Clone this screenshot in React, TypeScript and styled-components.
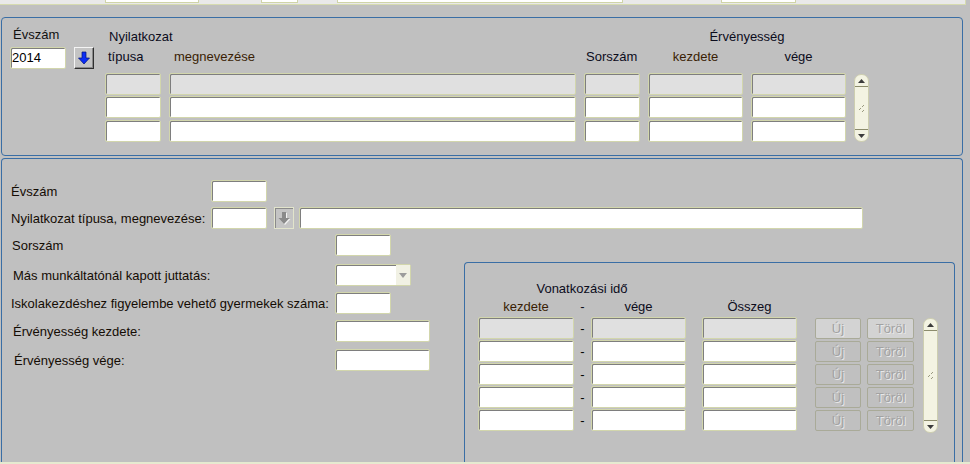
import React from "react";
import styled, { createGlobalStyle } from "styled-components";

const GlobalStyle = createGlobalStyle`
  html, body {
    margin: 0;
    padding: 0;
    background: #c0c0c0;
  }
  body {
    font-family: "Liberation Sans", Arial, sans-serif;
    font-size: 13px;
    color: #111;
  }
`;

const Page = styled.div`
  width: 970px;
  height: 464px;
  overflow: hidden;
  display: flex;
  flex-direction: column;
`;

const TopStrip = styled.div`
  width: 965px;
  height: 4px;
  flex-shrink: 0;
  display: flex;
  align-items: flex-start;
  background: #e9e9e9;
  border-bottom: 1px solid #d6dbb0;
  border-right: 1px solid #d6dbb0;
`;

const StripField = styled.div<{ $gap: number; $w: number }>`
  margin-left: ${(p) => p.$gap}px;
  width: ${(p) => p.$w}px;
  height: 3px;
  box-sizing: border-box;
  background: #fff;
  border: 1px solid #d0d4a8;
  border-top: none;
`;

const Panel = styled.div<{ $top: number; $h: number; $open?: boolean }>`
  margin-top: ${(p) => p.$top}px;
  margin-left: 1px;
  width: 962px;
  height: ${(p) => p.$h}px;
  flex-shrink: 0;
  box-sizing: border-box;
  display: flex;
  border: 1px solid #3a6ea5;
  border-radius: ${(p) => (p.$open ? "4px 4px 0 0" : "4px")};
  ${(p) => (p.$open ? "border-bottom: none;" : "")}
`;

const BottomStrip = styled.div`
  height: 2px;
  background: #e6ead0;
`;

/* ---------- shared widgets ---------- */

const Field = styled.div<{ $w: number; $muted?: boolean }>`
  width: ${(p) => p.$w}px;
  height: 22px;
  flex-shrink: 0;
  box-sizing: border-box;
  padding: 2px 0 0 1px;
  line-height: 15px;
  color: #000;
  background: ${(p) => (p.$muted ? "#e0e0e0" : "#fff")};
  border: 1px solid #d2d6ac;
  border-radius: 2px;
  box-shadow: inset 1px 1px 0 #7e7e7e;
`;

const LovButton = styled.div<{ $disabled?: boolean }>`
  width: 20px;
  height: 22px;
  flex-shrink: 0;
  box-sizing: border-box;
  display: flex;
  align-items: center;
  justify-content: center;
  background: #c4c4c4;
  border: 1px solid;
  border-color: ${(p) =>
    p.$disabled ? "#e2e4cc #e2e4cc #e2e4cc #e2e4cc" : "#f4f4f4 #303030 #303030 #f4f4f4"};
  box-shadow: ${(p) => (p.$disabled ? "inset 1px 1px 0 #8a8a8a" : "inset -1px -1px 0 #8a8a8a")};
`;

const Scroll = styled.div<{ $h: number; $top: number; $left: number }>`
  width: 15px;
  height: ${(p) => p.$h}px;
  margin-top: ${(p) => p.$top}px;
  margin-left: ${(p) => p.$left}px;
  flex-shrink: 0;
  box-sizing: border-box;
  display: flex;
  flex-direction: column;
  overflow: hidden;
  background: #f3f3e2;
  border: 1px solid #cdceb0;
  border-radius: 7px;
`;

const ScrollEnd = styled.div<{ $up?: boolean }>`
  height: 11px;
  flex-shrink: 0;
  display: flex;
  align-items: center;
  justify-content: center;
  ${(p) => (p.$up ? "border-bottom" : "border-top")}: 1px solid #8c8c6c;
`;

const ScrollTrack = styled.div`
  flex: 1;
  display: flex;
  align-items: center;
  justify-content: center;
`;

function Scrollbar({ h, top, left }: { h: number; top: number; left: number }) {
  return (
    <Scroll $h={h} $top={top} $left={left}>
      <ScrollEnd $up>
        <svg width="7" height="4" viewBox="0 0 7 4">
          <path d="M3.5 0L7 4H0z" fill="#3c3c3c" />
        </svg>
      </ScrollEnd>
      <ScrollTrack>
        <svg width="7" height="9" viewBox="0 0 7 9">
          <rect x="5" y="1" width="1" height="1" fill="#9a9a80" />
          <rect x="4" y="2" width="1" height="1" fill="#9a9a80" />
          <rect x="2" y="4" width="1" height="1" fill="#9a9a80" />
          <rect x="1" y="5" width="1" height="1" fill="#9a9a80" />
          <rect x="5" y="6" width="1" height="1" fill="#9a9a80" />
          <rect x="4" y="7" width="1" height="1" fill="#9a9a80" />
        </svg>
      </ScrollTrack>
      <ScrollEnd>
        <svg width="7" height="4" viewBox="0 0 7 4">
          <path d="M0 0H7L3.5 4z" fill="#3c3c3c" />
        </svg>
      </ScrollEnd>
    </Scroll>
  );
}

/* ---------- top panel ---------- */

const YearBlock = styled.div`
  width: 103px;
  flex-shrink: 0;
  box-sizing: border-box;
  padding: 9px 0 0 8px;
`;

const YearLabel = styled.div`
  height: 15px;
  line-height: 15px;
  padding-left: 3px;
`;

const YearInputs = styled.div`
  display: flex;
  gap: 8px;
  margin-top: 5px;
`;

const TableBlock = styled.div`
  padding-top: 11px;
  display: flex;
  flex-direction: column;
`;

const HeadLine = styled.div<{ $top?: number }>`
  display: grid;
  grid-template-columns: 56px 407px 56px 95px 95px;
  column-gap: 8px;
  height: 15px;
  line-height: 15px;
  margin-top: ${(p) => p.$top ?? 0}px;
`;

const Head = styled.div<{ $span?: string; $pad?: number; $center?: boolean; $brown?: boolean }>`
  grid-column: ${(p) => p.$span ?? "auto"};
  padding-left: ${(p) => p.$pad ?? 0}px;
  text-align: ${(p) => (p.$center ? "center" : "left")};
  white-space: nowrap;
  color: ${(p) => (p.$brown ? "#3a1e04" : "#0c0c1c")};
`;

const RowsArea = styled.div<{ $top: number }>`
  display: flex;
  margin-top: ${(p) => p.$top}px;
`;

const DataGrid = styled.div`
  display: grid;
  grid-template-columns: 56px 407px 56px 95px 95px;
  column-gap: 8px;
  row-gap: 1px;
`;

/* ---------- lower panel ---------- */

const LeftForm = styled.div`
  width: 462px;
  flex-shrink: 0;
  padding-top: 21px;
  display: flex;
  flex-direction: column;
`;

const FormRow = styled.div<{ $top: number; $indent: number }>`
  display: flex;
  align-items: center;
  margin-top: ${(p) => p.$top}px;
  padding-left: ${(p) => 9 + p.$indent}px;
`;

const FormLabel = styled.div<{ $w: number }>`
  width: ${(p) => p.$w}px;
  flex-shrink: 0;
  white-space: nowrap;
  color: #140c04;
`;

const Gap = styled.div<{ $w: number }>`
  width: ${(p) => p.$w}px;
  flex-shrink: 0;
`;

const Select = styled(Field)`
  display: flex;
  justify-content: flex-end;
  padding: 0;
`;

const SelectArrow = styled.div`
  width: 14px;
  display: flex;
  align-items: center;
  justify-content: center;
  background: #f1f1e4;
`;

const RightCol = styled.div`
  flex: 1;
  padding: 103px 7px 0 0;
  display: flex;
  flex-direction: column;
`;

const SubPanel = styled.div`
  flex: 1;
  box-sizing: border-box;
  padding: 18px 0 0 13px;
  border: 1px solid #3a6ea5;
  border-bottom: none;
  border-radius: 4px 4px 0 0;
`;

const SubHead = styled.div<{ $top?: number }>`
  display: flex;
  height: 15px;
  line-height: 15px;
  margin-top: ${(p) => p.$top ?? 0}px;
`;

const SubHeadCell = styled.div<{ $w: number; $gap?: number; $brown?: boolean }>`
  width: ${(p) => p.$w}px;
  margin-left: ${(p) => p.$gap ?? 0}px;
  text-align: center;
  white-space: nowrap;
  color: ${(p) => (p.$brown ? "#3a1e04" : "#0c0c1c")};
`;

const SubRows = styled.div`
  display: flex;
  flex-direction: column;
  gap: 1px;
`;

const SubRow = styled.div`
  display: flex;
  align-items: center;
`;

const Dash = styled.div`
  width: 17px;
  text-align: center;
  color: #000;
`;

const RowButton = styled.div<{ $w: number; $gap: number; $first?: boolean }>`
  width: ${(p) => p.$w}px;
  height: 21px;
  margin-left: ${(p) => p.$gap}px;
  box-sizing: border-box;
  display: flex;
  align-items: center;
  justify-content: center;
  background: ${(p) => (p.$first ? "#d3d3d3" : "#c0c0c0")};
  border: 1px solid #a9aa98;
  border-radius: 2px;
  color: #a2a2a2;
  text-shadow: 1px 1px 0 #e8e8e8;
`;

function BlueArrow() {
  return (
    <svg width="12" height="14" viewBox="0 0 12 14">
      <path d="M4 1h4v6h3.5L6 13 0.5 7H4z" fill="#0a2cf5" stroke="#00127a" strokeWidth="0.7" />
    </svg>
  );
}

function GreyArrow() {
  return (
    <svg width="13" height="14" viewBox="0 0 13 14">
      <path d="M5 2h4v6h3.5L7 14 1.5 8H5z" fill="#f2f2f2" />
      <path d="M4 1h4v6h3.5L6 13 0.5 7H4z" fill="#8a8a8a" />
    </svg>
  );
}

export default function App() {
  const topRows = [0, 1, 2];
  const subRows = [0, 1, 2, 3, 4];

  return (
    <Page>
      <GlobalStyle />
      <TopStrip>
        <StripField $gap={105} $w={94} />
        <StripField $gap={62} $w={37} />
        <StripField $gap={39} $w={286} />
        <StripField $gap={98} $w={75} />
      </TopStrip>

      <Panel $top={12} $h={139}>
        <YearBlock>
          <YearLabel>Évszám</YearLabel>
          <YearInputs>
            <Field $w={56}>2014</Field>
            <LovButton>
              <BlueArrow />
            </LovButton>
          </YearInputs>
        </YearBlock>

        <TableBlock>
          <HeadLine>
            <Head $span="1 / 3" $pad={4}>
              Nyilatkozat
            </Head>
            <Head $span="4 / 6" $center>
              Érvényesség
            </Head>
          </HeadLine>
          <HeadLine $top={5}>
            <Head $pad={3}>típusa</Head>
            <Head $pad={5} $brown>
              megnevezése
            </Head>
            <Head $pad={2}>Sorszám</Head>
            <Head $center $brown>
              kezdete
            </Head>
            <Head $center>vége</Head>
          </HeadLine>
          <RowsArea $top={9}>
            <DataGrid>
              {topRows.map((r) => (
                <React.Fragment key={r}>
                  <Field $w={56} $muted={r === 0} />
                  <Field $w={407} $muted={r === 0} />
                  <Field $w={56} $muted={r === 0} />
                  <Field $w={95} $muted={r === 0} />
                  <Field $w={95} $muted={r === 0} />
                </React.Fragment>
              ))}
            </DataGrid>
            <Scrollbar h={68} top={1} left={8} />
          </RowsArea>
        </TableBlock>
      </Panel>

      <Panel $top={2} $h={304} $open>
        <LeftForm>
          <FormRow $top={0} $indent={0}>
            <FormLabel $w={200}>Évszám</FormLabel>
            <Field $w={56} />
          </FormRow>
          <FormRow $top={5} $indent={0}>
            <FormLabel $w={200}>Nyilatkozat típusa, megnevezése:</FormLabel>
            <Field $w={56} />
            <Gap $w={7} />
            <LovButton $disabled>
              <GreyArrow />
            </LovButton>
            <Gap $w={5} />
            <Field $w={564} />
          </FormRow>
          <FormRow $top={5} $indent={1}>
            <FormLabel $w={323}>Sorszám</FormLabel>
            <Field $w={56} />
          </FormRow>
          <FormRow $top={8} $indent={2}>
            <FormLabel $w={322}>Más munkáltatónál kapott juttatás:</FormLabel>
            <Select $w={76}>
              <SelectArrow>
                <svg width="8" height="5" viewBox="0 0 8 5">
                  <path d="M0 0H8L4 5z" fill="#9c9c9c" />
                </svg>
              </SelectArrow>
            </Select>
          </FormRow>
          <FormRow $top={6} $indent={0}>
            <FormLabel $w={324}>Iskolakezdéshez figyelembe vehető gyermekek száma:</FormLabel>
            <Field $w={56} />
          </FormRow>
          <FormRow $top={6} $indent={2}>
            <FormLabel $w={322}>Érvényesség kezdete:</FormLabel>
            <Field $w={95} />
          </FormRow>
          <FormRow $top={7} $indent={3}>
            <FormLabel $w={321}>Érvényesség vége:</FormLabel>
            <Field $w={95} />
          </FormRow>
        </LeftForm>

        <RightCol>
          <SubPanel>
            <SubHead>
              <SubHeadCell $w={208}>Vonatkozási idő</SubHeadCell>
            </SubHead>
            <SubHead $top={3}>
              <SubHeadCell $w={96} $brown>
                kezdete
              </SubHeadCell>
              <SubHeadCell $w={17}>-</SubHeadCell>
              <SubHeadCell $w={95}>vége</SubHeadCell>
              <SubHeadCell $w={95} $gap={16}>
                Összeg
              </SubHeadCell>
            </SubHead>
            <RowsArea $top={3}>
              <SubRows>
                {subRows.map((r) => (
                  <SubRow key={r}>
                    <Field $w={96} $muted={r === 0} />
                    <Dash>-</Dash>
                    <Field $w={95} $muted={r === 0} />
                    <Gap $w={16} />
                    <Field $w={95} $muted={r === 0} />
                    <RowButton $w={46} $gap={18} $first={r === 0}>
                      Új
                    </RowButton>
                    <RowButton $w={47} $gap={6} $first={r === 0}>
                      Töröl
                    </RowButton>
                  </SubRow>
                ))}
              </SubRows>
              <Scrollbar h={115} top={1} left={9} />
            </RowsArea>
          </SubPanel>
        </RightCol>
      </Panel>
      <BottomStrip />
    </Page>
  );
}
